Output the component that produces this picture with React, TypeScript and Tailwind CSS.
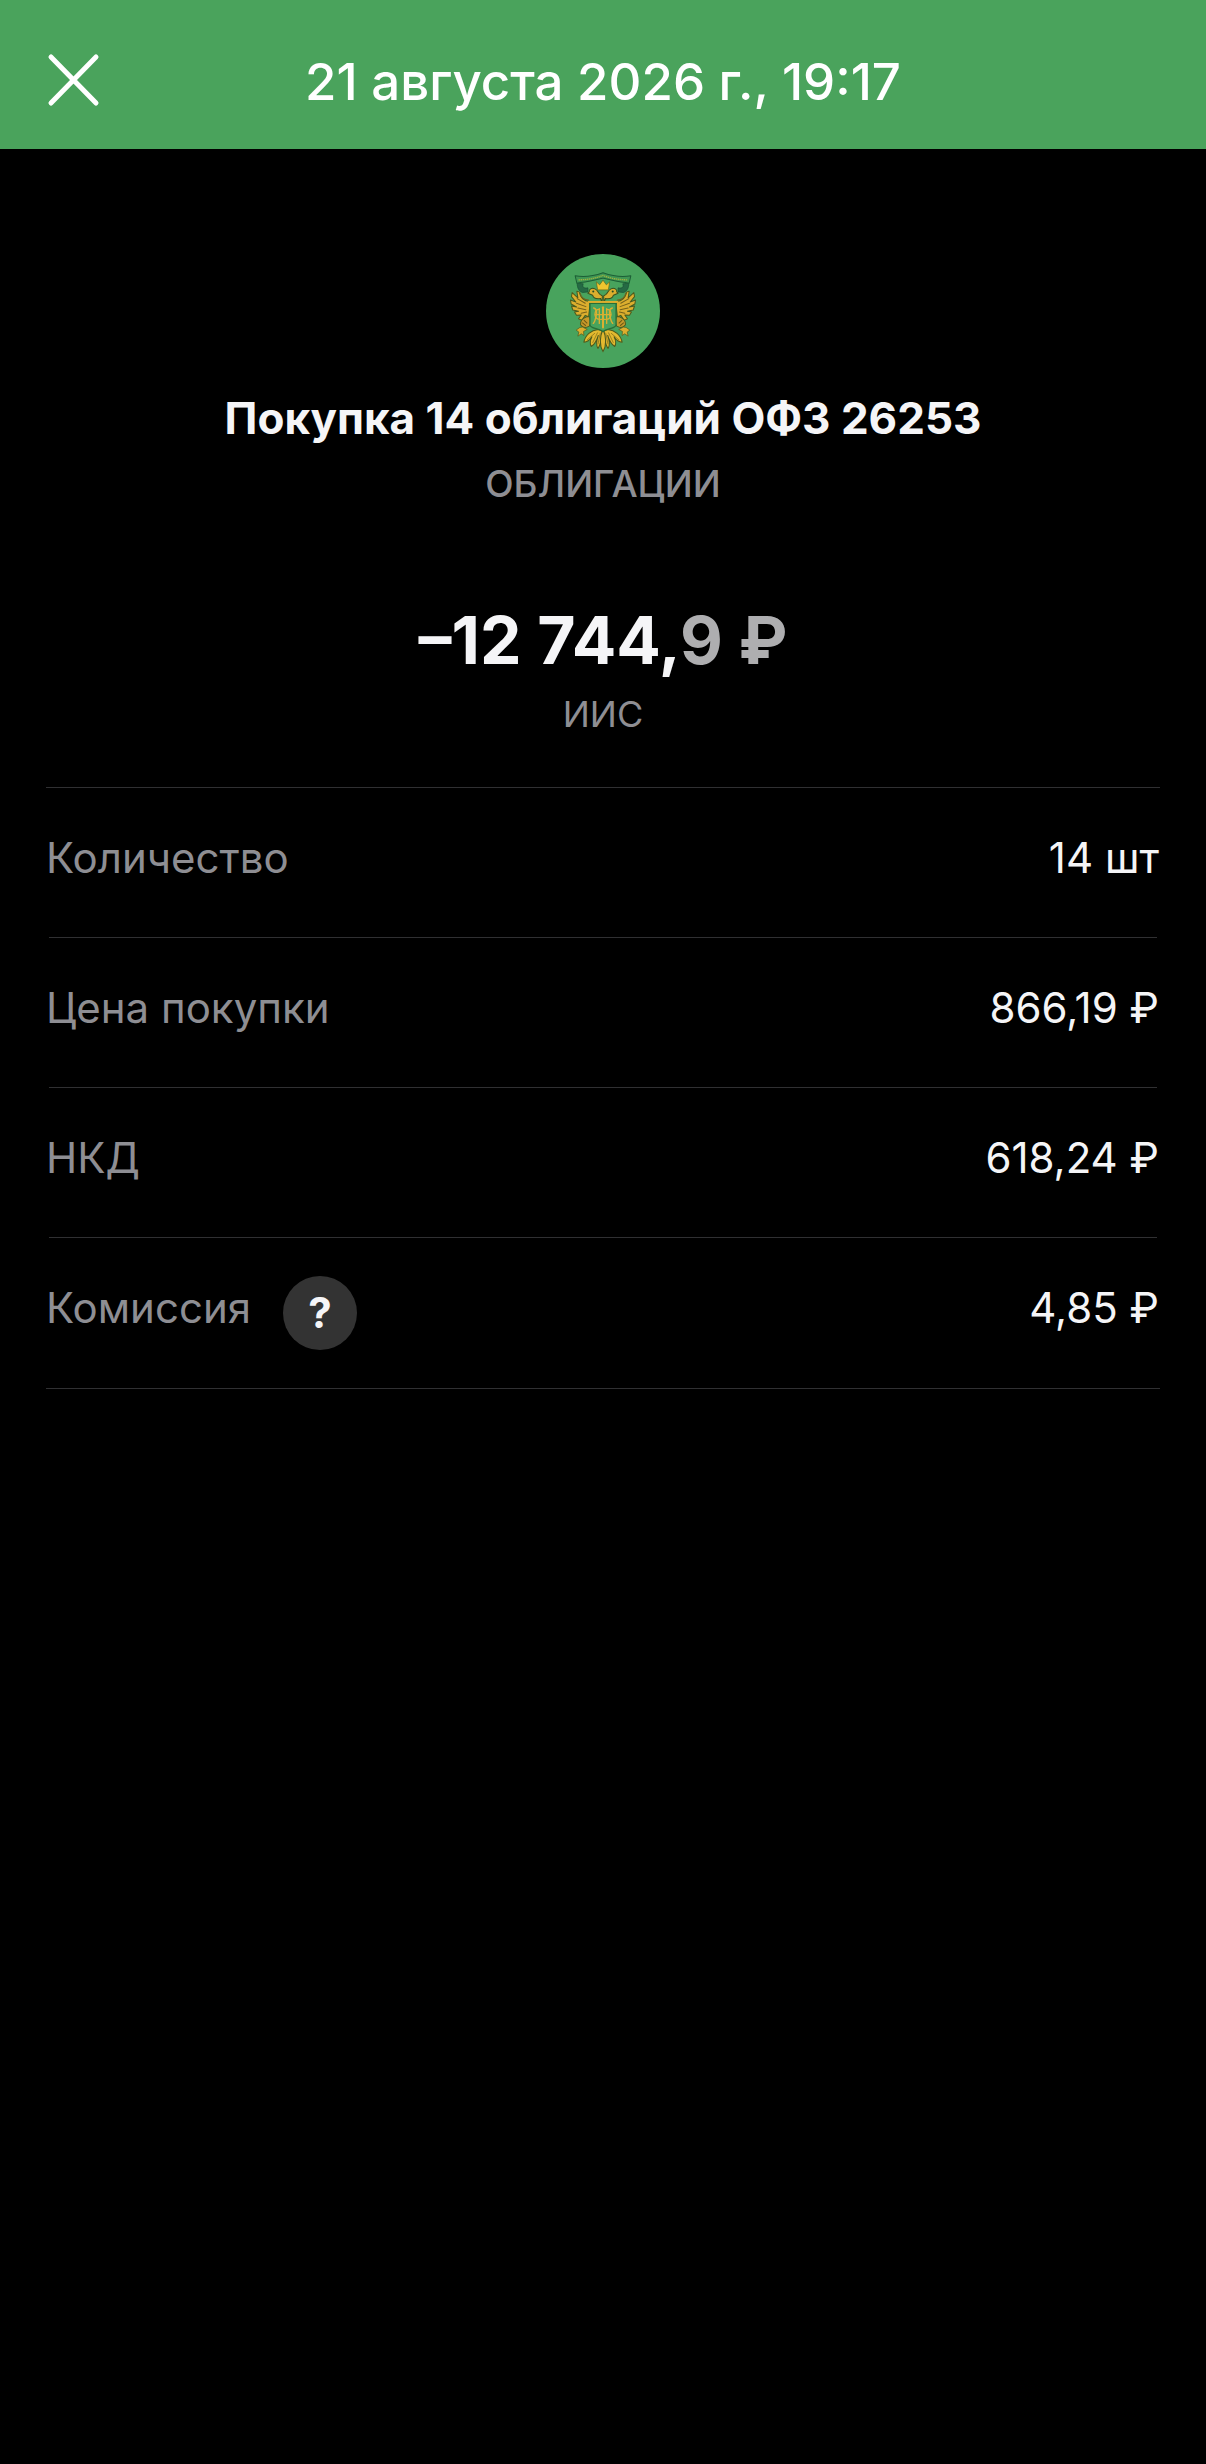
const details = [
  { label: "Количество", value: "14 шт" },
  { label: "Цена покупки", value: "866,19 ₽" },
  { label: "НКД", value: "618,24 ₽" },
  { label: "Комиссия", value: "4,85 ₽", hint: true },
];

// left half of the eagle, the right one is mirrored
function EagleHalf() {
  return (
    <g>
      <path
        d="M180 184 C164 184 154 174 150 156 L143 154 L146 174 L129 158 L127 170 L140 186 L124 180 L126 192 L142 201 L127 198 L131 210 L148 214 L136 216 L142 226 L156 225 L148 236 L158 241 L168 226 L178 230 L182 196 Z"
        fill="#dcae2e"
        stroke="#4d5a1c"
        strokeWidth="3"
        strokeLinejoin="round"
      />
      <path
        d="M152 158 C156 172 166 180 178 180 M144 176 L168 190 M142 190 L170 200 M146 204 L170 209 M156 220 L172 216"
        fill="none"
        stroke="#75611a"
        strokeWidth="3"
        strokeLinecap="round"
      />
      <path
        d="M144 130 C144 146 150 154 160 158 L176 156 L176 144 C164 146 158 142 162 132 Z"
        fill="#256a44"
        stroke="#184f33"
        strokeWidth="2"
      />
      <path
        d="M172 230 C160 234 152 244 154 254 C160 263 170 264 180 258 C185 250 184 238 181 230 Z"
        fill="#c7992a"
        stroke="#4d5a1c"
        strokeWidth="3"
      />
      <path
        d="M164 240 L174 250 M159 248 L170 257"
        stroke="#6d5a16"
        strokeWidth="3"
      />
      <path
        d="M152 262 L141 270 L149 276 L146 288 L156 281 L164 286 L163 274 L174 268 L160 261 Z"
        fill="#dcae2e"
        stroke="#4d5a1c"
        strokeWidth="2"
      />
      <path
        d="M218 188 L214 176 C202 178 192 174 190 166 L176 160 L180 156 C178 148 188 143 197 147 C206 151 206 159 213 164 L219 168 Z"
        fill="#dcae2e"
        stroke="#3b4f1c"
        strokeWidth="3"
        strokeLinejoin="round"
      />
      <circle cx="192" cy="155" r="3" fill="#254b22" />
      <path
        d="M206 268 C186 270 168 284 164 306 C176 306 183 298 188 290 C183 300 181 311 186 319 C198 312 203 298 207 286 C202 300 200 316 206 325 C214 314 217 296 218 272 Z"
        fill="#e3b92f"
        stroke="#4d5a1c"
        strokeWidth="3"
        strokeLinejoin="round"
      />
      <path
        d="M213 278 L206 312 M205 277 L190 308 M197 279 L173 300"
        stroke="#7a6417"
        strokeWidth="2"
      />
    </g>
  );
}

function Emblem() {
  return (
    <svg
      className="size-[114px]"
      viewBox="51 43 340 340"
      role="img"
      aria-label="ОФЗ"
    >
      <circle cx="221" cy="213" r="170" fill="#48a35d" />
      <EagleHalf />
      <g transform="translate(442 0) scale(-1 1)">
        <EagleHalf />
      </g>
      {/* ribbon */}
      <path
        d="M138 108 C164 113 190 110 221 99 C252 110 278 113 304 108 L299 130 L288 128 C262 126 240 120 221 115 C202 120 180 126 154 128 L143 130 Z"
        fill="#3f9653"
        stroke="#1c5e36"
        strokeWidth="3"
        strokeLinejoin="round"
      />
      <path
        d="M148 120 C176 120 200 115 221 107 C242 115 266 120 294 120"
        fill="none"
        stroke="#9fb03f"
        strokeWidth="4"
        strokeDasharray="4 2"
      />
      {/* crown */}
      <path
        d="M205 150 L201 126 L211 135 L221 121 L231 135 L241 126 L237 150 Z"
        fill="#f0c52f"
        stroke="#59651f"
        strokeWidth="2"
      />
      {/* tail */}
      <path
        d="M221 268 C211 288 210 316 221 334 C232 316 231 288 221 268 Z"
        fill="#e3b92f"
        stroke="#4d5a1c"
        strokeWidth="3"
      />
      {/* shield */}
      <path
        d="M182 190 H260 V254 C260 266 234 264 221 274 C208 264 182 266 182 254 Z"
        fill="#48a35d"
        stroke="#286f37"
        strokeWidth="4"
      />
      <path d="M176 186 H266" stroke="#dcae2e" strokeWidth="6" />
      <g fill="none" stroke="#d9b032" strokeWidth="4" strokeLinecap="round">
        <path d="M193 204 C204 206 203 222 200 230 C198 240 196 246 192 250 M249 204 C238 206 239 222 242 230 C244 240 246 246 250 250" />
        <path d="M210 208 C194 208 192 236 210 238 M232 208 C248 208 250 236 232 238" />
        <path d="M210 206 V250 M232 206 V250" />
        <path d="M221 202 V262" strokeWidth="6" />
        <path d="M198 224 H244 M214 238 H228" />
      </g>
    </svg>
  );
}

function App() {
  return (
    <div className="min-h-screen bg-black text-[#f5f5f7] font-[Inter,sans-serif]">
      <header className="bg-[#4aa35c] text-white px-[46px] pt-[52px] pb-[37px] flex items-start">
        <button
          type="button"
          aria-label="Закрыть"
          className="w-14 cursor-pointer"
        >
          <svg
            className="size-14"
            viewBox="0 0 56 56"
            fill="none"
            stroke="currentColor"
            strokeWidth="5"
            strokeLinecap="round"
          >
            <path d="M5 5L50 51M50 5L5 51" />
          </svg>
        </button>
        <h1 className="flex-1 text-center text-[51px] leading-[60px] font-medium">
          21 августа 2026 г., 19:17
        </h1>
        <div className="w-14" />
      </header>

      <main className="px-[46px] pt-[105px]">
        <section className="flex flex-col items-center text-center">
          <Emblem />
          <h2 className="mt-[22px] text-[44px] leading-[56px] font-bold">
            Покупка 14 облигаций ОФЗ 26253
          </h2>
          <p className="mt-2.5 text-[37px] leading-[56px] font-medium text-[#8e8e93]">
            ОБЛИГАЦИИ
          </p>
          <p className="mt-[88px] text-[66px] leading-[80px] font-bold">
            –12 744,<span className="text-[#aeaeb0]">9 ₽</span>
          </p>
          <p className="mt-1.5 text-4xl leading-[56px] text-[#8e8e93]">ИИС</p>
        </section>

        <dl className="mt-[45px] border-y border-[#303032]">
          {details.map((item) => (
            <div
              key={item.label}
              className="h-[150px] mx-[3px] pb-2.5 flex items-center justify-between border-b border-[#303032] last:border-b-0 text-[42px] leading-[56px]"
            >
              <dt className="-ml-[3px] flex items-center gap-8 text-[#8e8e93]">
                {item.label}
                {item.hint && (
                  <button
                    type="button"
                    aria-label="Подробнее о комиссии"
                    className="mt-2.5 size-[74px] rounded-full bg-[#333333] text-[#f5f5f7] font-bold cursor-pointer"
                  >
                    ?
                  </button>
                )}
              </dt>
              <dd className="-mr-0.5">{item.value}</dd>
            </div>
          ))}
        </dl>
      </main>
    </div>
  );
}

export default App;
